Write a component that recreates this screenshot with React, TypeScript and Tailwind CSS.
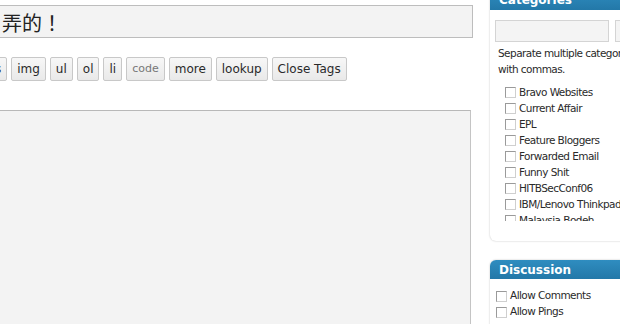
import React from "react";

const font = { fontFamily: '"DejaVu Sans", "Noto Sans CJK SC", sans-serif' };
const cjk = { fontFamily: '"Noto Sans CJK JP", "Noto Sans CJK SC", sans-serif' };

function Btn({ label, dim }: { label: string; dim?: boolean }) {
  return (
    <div
      className={`h-[24px] shrink-0 px-[5px] flex items-center border border-[#c8c8c8] rounded-[2px] bg-gradient-to-b from-[#f7f7f7] to-[#e9e9e9] ${
        dim ? "text-[11px] text-[#777]" : "text-[12px] text-[#2a2a2a]"
      }`}
    >
      {label}
    </div>
  );
}

function Check({ label }: { label: string }) {
  return (
    <div className="flex items-center h-[16px] gap-[3px] whitespace-nowrap">
      <div className="w-[11px] h-[11px] border border-[#9a9a9a] border-b-[#cfcfcf] border-r-[#cfcfcf] bg-white shrink-0" />
      <span>{label}</span>
    </div>
  );
}

export default function App() {
  const cats = [
    "Bravo Websites",
    "Current Affair",
    "EPL",
    "Feature Bloggers",
    "Forwarded Email",
    "Funny Shit",
    "HITBSecConf06",
    "IBM/Lenovo Thinkpad",
    "Malaysia Bodeh",
    "Movies",
  ];
  return (
    <div className="w-[620px] h-[324px] overflow-hidden bg-white flex" style={font}>
      <div className="w-[473px] shrink-0 pt-[5px]">
        <div
          className="h-[33px] -ml-[12px] border border-[#bdbdbd] bg-[#f3f3f3] flex items-center pl-[13px] pt-[3px] text-[20px] text-[#222] overflow-hidden whitespace-nowrap"
          style={cjk}
        >
          弄的！
        </div>
        <div className="flex gap-[4px] mt-[19px] -ml-[22px]">
          <Btn label="ins" />
          <Btn label="img" />
          <Btn label="ul" />
          <Btn label="ol" />
          <Btn label="li" />
          <Btn label="code" dim />
          <Btn label="more" />
          <Btn label="lookup" />
          <Btn label="Close Tags" />
        </div>
        <div className="mt-[29px] -ml-[10px] w-[481px] h-[230px] border border-[#c4c4c4] border-t-[#b8b8b8] bg-[#f3f3f3]" />
      </div>
      <div className="ml-[17px] w-[150px] shrink-0 text-[10.5px] tracking-[-0.55px] text-[#2a2a2a]">
        <div className="-mt-[10px] rounded-[6px] bg-white shadow-[0_0_2px_rgba(0,0,0,0.25)] pb-[20px]">
          <div className="h-[20px] rounded-t-[6px] bg-gradient-to-b from-[#2f8dc0] to-[#2378a8] text-white text-[12px] tracking-normal font-bold pl-[9px] flex items-center">
            Categories
          </div>
          <div className="flex gap-[6px] pl-[5px] mt-[10px]">
            <div className="w-[114px] h-[22px] border border-[#d4d4d4] bg-[#f4f4f4] shrink-0" />
            <div className="w-[40px] h-[22px] border border-[#d4d4d4] bg-[#f4f4f4] shrink-0" />
          </div>
          <div className="pl-[8px] mt-[3px] leading-[16px] whitespace-nowrap">
            <div>Separate multiple categories</div>
            <div>with commas.</div>
          </div>
          <div className="pl-[15px] mt-[7px] h-[137px] overflow-hidden leading-[16px]">
            {cats.map((c) => (
              <Check key={c} label={c} />
            ))}
          </div>
        </div>
        <div className="mt-[19px] rounded-[6px] bg-white shadow-[0_0_2px_rgba(0,0,0,0.25)] h-[100px]">
          <div className="h-[19px] rounded-t-[6px] bg-gradient-to-b from-[#2f8dc0] to-[#2378a8] text-white text-[12px] tracking-normal font-bold pl-[9px] flex items-center">
            Discussion
          </div>
          <div className="pl-[6px] mt-[9px]">
            <Check label="Allow Comments" />
            <Check label="Allow Pings" />
          </div>
        </div>
      </div>
    </div>
  );
}
